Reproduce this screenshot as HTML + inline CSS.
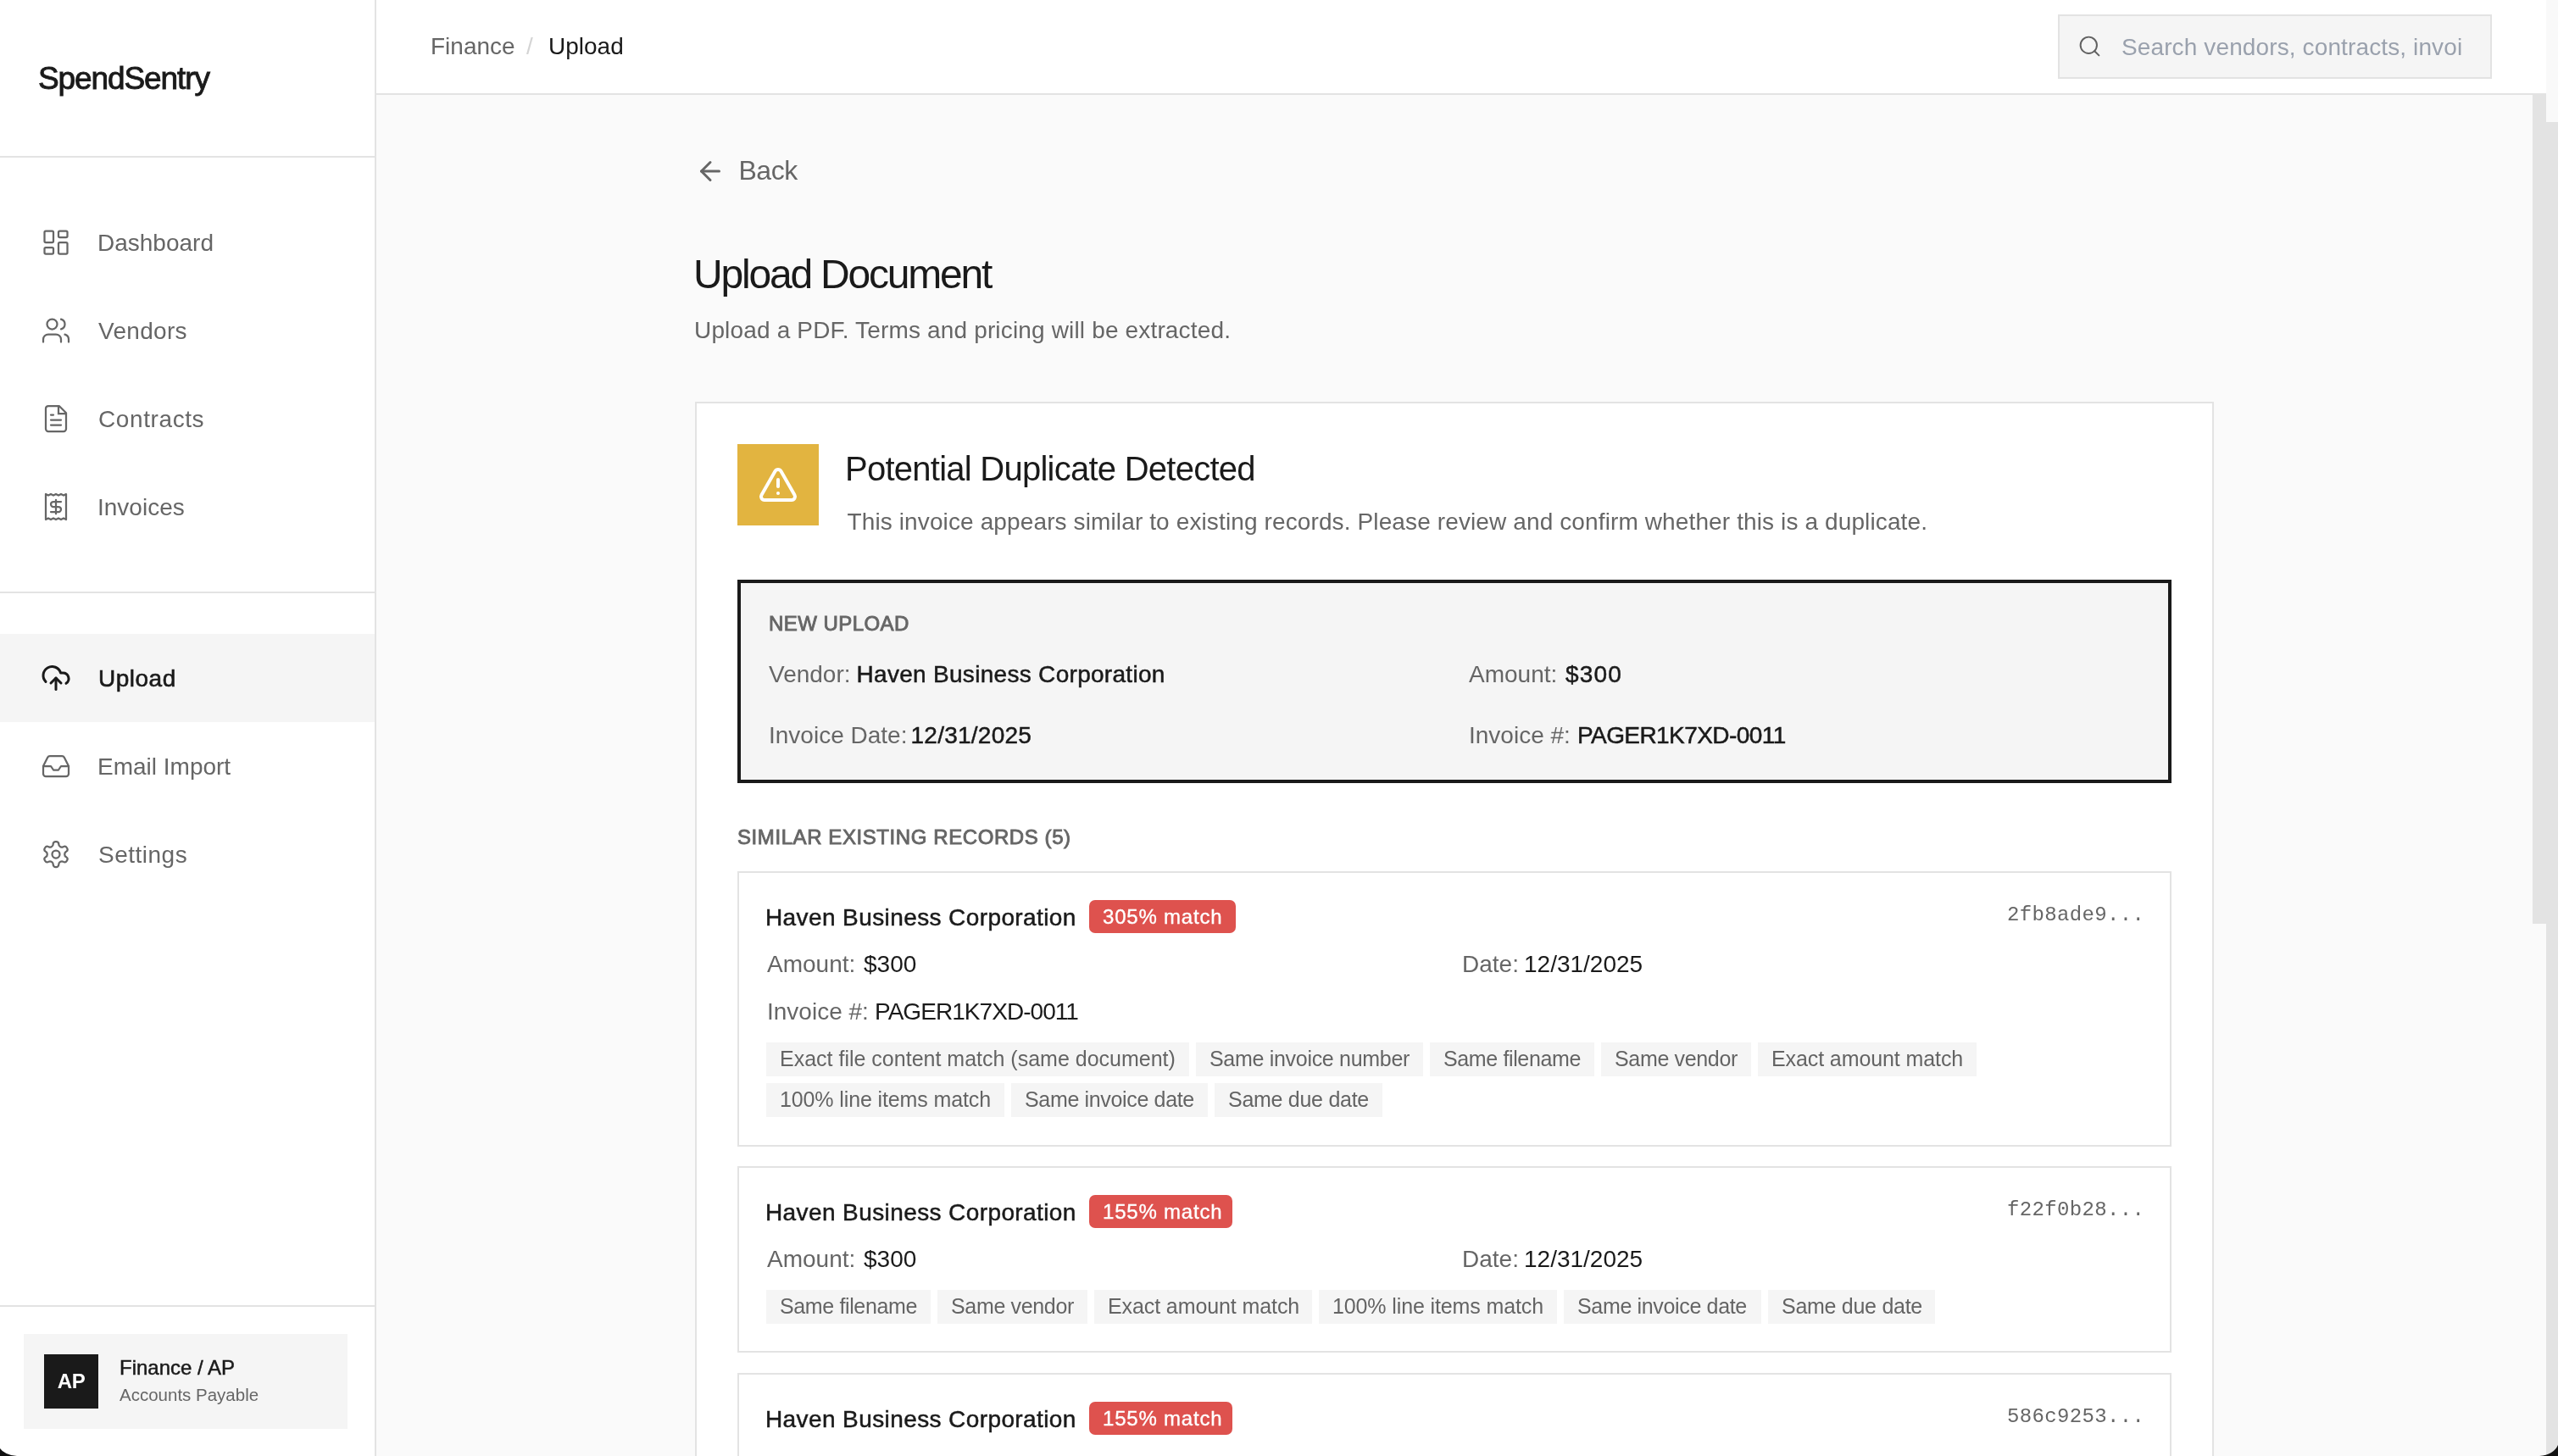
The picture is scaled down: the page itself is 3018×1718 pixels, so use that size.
<!DOCTYPE html>
<html>
<head>
<meta charset="utf-8">
<style>
html,body{margin:0;padding:0;width:3018px;height:1718px;overflow:hidden;background:#fafafa;font-family:"Liberation Sans",sans-serif;}
.a{position:absolute;}
.t{position:absolute;white-space:nowrap;line-height:1;}
.ic{position:absolute;fill:none;stroke-linecap:round;stroke-linejoin:round;}
.muted{color:#666;}
.dark{color:#1a1a1a;}
.f28{font-size:28px;}
.f24{font-size:24px;}
.tag{position:absolute;height:40px;background:#f5f5f5;}
.tag span{position:absolute;left:16px;top:7px;font-size:25px;line-height:1;color:#646464;white-space:nowrap;}
.badge{position:absolute;height:39px;background:#de524e;border-radius:7px;}
.badge span{position:absolute;left:16px;top:7.5px;font-size:24px;line-height:1;color:#fff;white-space:nowrap;letter-spacing:0.8px;-webkit-text-stroke:0.35px #fff;}
.mono{font-family:"Liberation Mono",monospace;}
.med{-webkit-text-stroke:0.5px currentColor;}
</style>
</head>
<body>
<div id="root" style="position:absolute;left:0;top:0;width:3018px;height:1718px;will-change:transform;">
<!-- SIDEBAR -->
<div class="a" style="left:0;top:0;width:442px;height:1718px;background:#fff;border-right:2px solid #e3e3e3;"></div>
<div class="t dark" style="left:45px;top:73.5px;font-size:37px;letter-spacing:-1.1px;-webkit-text-stroke:0.9px #1a1a1a;">SpendSentry</div>
<div class="a" style="left:0;top:184px;width:442px;height:2px;background:#e3e3e3;"></div>

<!-- nav icons -->
<svg class="ic" style="left:48px;top:268px" width="36" height="36" viewBox="0 0 24 24" stroke="#666" stroke-width="1.5"><rect width="7" height="9" x="3" y="3" rx="1"/><rect width="7" height="5" x="14" y="3" rx="1"/><rect width="7" height="9" x="14" y="12" rx="1"/><rect width="7" height="5" x="3" y="16" rx="1"/></svg>
<div class="t f28 muted" style="left:115px;top:273.2px;">Dashboard</div>

<svg class="ic" style="left:48px;top:372px" width="36" height="36" viewBox="0 0 24 24" stroke="#666" stroke-width="1.5"><path d="M16 21v-2a4 4 0 0 0-4-4H6a4 4 0 0 0-4 4v2"/><circle cx="9" cy="7" r="4"/><path d="M22 21v-2a4 4 0 0 0-3-3.87"/><path d="M16 3.13a4 4 0 0 1 0 7.75"/></svg>
<div class="t f28 muted" style="left:116px;top:377.2px;letter-spacing:0.3px;">Vendors</div>

<svg class="ic" style="left:48px;top:476px" width="36" height="36" viewBox="0 0 24 24" stroke="#666" stroke-width="1.5"><path d="M14.5 2H6a2 2 0 0 0-2 2v16a2 2 0 0 0 2 2h12a2 2 0 0 0 2-2V7.5L14.5 2z"/><polyline points="14 2 14 8 20 8" stroke-linejoin="miter"/><path d="M10 9H8"/><path d="M16 13H8"/><path d="M16 17H8"/></svg>
<div class="t f28 muted" style="left:116px;top:481.2px;letter-spacing:0.6px;">Contracts</div>

<svg class="ic" style="left:48px;top:580px" width="36" height="36" viewBox="0 0 24 24" stroke="#666" stroke-width="1.5"><path d="M4 2v20l2-1 2 1 2-1 2 1 2-1 2 1 2-1 2 1V2l-2 1-2-1-2 1-2-1-2 1-2-1-2 1Z"/><path d="M16 8h-6a2 2 0 1 0 0 4h4a2 2 0 1 1 0 4H8"/><path d="M12 17.5v-11"/></svg>
<div class="t f28 muted" style="left:115px;top:585.2px;">Invoices</div>

<div class="a" style="left:0;top:698px;width:442px;height:2px;background:#e3e3e3;"></div>

<div class="a" style="left:0;top:748px;width:442px;height:104px;background:#f5f5f5;"></div>
<svg class="ic" style="left:48px;top:782px" width="36" height="36" viewBox="0 0 24 24" stroke="#1a1a1a" stroke-width="2"><path d="M12 12v9"/><path d="M4 14.899A7 7 0 1 1 15.71 8h1.79a4.5 4.5 0 0 1 2.5 8.242"/><path d="m16 16-4-4-4 4"/></svg>
<div class="t f28 dark" style="left:116px;top:787.2px;-webkit-text-stroke:0.6px #1a1a1a;letter-spacing:0.5px;">Upload</div>

<svg class="ic" style="left:48px;top:886px" width="36" height="36" viewBox="0 0 24 24" stroke="#666" stroke-width="1.5"><polyline points="22 12 16 12 14 15 10 15 8 12 2 12"/><path d="M5.45 5.11 2 12v6a2 2 0 0 0 2 2h16a2 2 0 0 0 2-2v-6l-3.45-6.89A2 2 0 0 0 16.76 4H7.24a2 2 0 0 0-1.79 1.11z"/></svg>
<div class="t f28 muted" style="left:115px;top:891.2px;">Email Import</div>

<svg class="ic" style="left:48px;top:990px" width="36" height="36" viewBox="0 0 24 24" stroke="#666" stroke-width="1.5"><path d="M12.22 2h-.44a2 2 0 0 0-2 2v.18a2 2 0 0 1-1 1.730l-.43.25a2 2 0 0 1-2 0l-.15-.08a2 2 0 0 0-2.73.73l-.22.38a2 2 0 0 0 .73 2.73l.15.1a2 2 0 0 1 1 1.72v.51a2 2 0 0 1-1 1.74l-.15.09a2 2 0 0 0-.73 2.73l.22.38a2 2 0 0 0 2.73.73l.15-.08a2 2 0 0 1 2 0l.43.25a2 2 0 0 1 1 1.73V20a2 2 0 0 0 2 2h.44a2 2 0 0 0 2-2v-.18a2 2 0 0 1 1-1.73l.43-.25a2 2 0 0 1 2 0l.15.08a2 2 0 0 0 2.73-.73l.22-.39a2 2 0 0 0-.73-2.73l-.15-.08a2 2 0 0 1-1-1.74v-.5a2 2 0 0 1 1-1.74l.15-.09a2 2 0 0 0 .73-2.73l-.22-.38a2 2 0 0 0-2.73-.73l-.15.08a2 2 0 0 1-2 0l-.43-.25a2 2 0 0 1-1-1.73V4a2 2 0 0 0-2-2z"/><circle cx="12" cy="12" r="3"/></svg>
<div class="t f28 muted" style="left:116px;top:995.2px;letter-spacing:0.5px;">Settings</div>

<div class="a" style="left:0;top:1540px;width:442px;height:2px;background:#e3e3e3;"></div>
<div class="a" style="left:28px;top:1574px;width:382px;height:112px;background:#f5f5f5;"></div>
<div class="a" style="left:52px;top:1598px;width:64px;height:64px;background:#1a1a1a;"></div>
<div class="t" style="left:52px;width:64px;text-align:center;top:1618.3px;font-size:24px;color:#fff;font-weight:700;letter-spacing:-0.3px;">AP</div>
<div class="t dark med" style="left:141px;top:1601.8px;font-size:24px;">Finance / AP</div>
<div class="t muted" style="left:141px;top:1636.3px;font-size:20.5px;">Accounts Payable</div>

<!-- HEADER -->
<div class="a" style="left:444px;top:0;width:2574px;height:110px;background:#fff;border-bottom:2px solid #e3e3e3;"></div>
<div class="t f28 muted" style="left:508px;top:41.1px;">Finance</div>
<div class="t f28" style="left:621px;top:41.1px;color:#d4d4d4;">/</div>
<div class="t f28 dark" style="left:647px;top:41.1px;">Upload</div>
<div class="a" style="left:2428px;top:17px;width:508px;height:72px;background:#f5f5f5;border:2px solid #e3e3e3;"></div>
<svg class="ic" style="left:2451.4px;top:40.3px" width="29" height="29" viewBox="0 0 24 24" stroke="#616161" stroke-width="1.65"><circle cx="11" cy="11" r="8"/><path d="m21 21-4.3-4.3"/></svg>
<div class="t f28" style="left:2503px;top:41.9px;color:#9aa1ad;letter-spacing:0.12px;">Search vendors, contracts, invoi</div>

<!-- scrollbars -->
<div class="a" style="left:2988px;top:110px;width:16px;height:980px;background:#e3e3e3;"></div>
<div class="a" style="left:3004px;top:0;width:14px;height:144px;background:#f9f9f9;"></div>
<div class="a" style="left:3004px;top:144px;width:14px;height:1574px;background:#e3e3e3;"></div>

<!-- MAIN -->
<svg class="ic" style="left:820px;top:184px" width="36" height="36" viewBox="0 0 24 24" stroke="#666" stroke-width="2"><path d="m12 19-7-7 7-7"/><path d="M19 12H5"/></svg>
<div class="t muted" style="left:871.5px;top:184.75px;font-size:32px;letter-spacing:-0.5px;">Back</div>

<div class="t dark" style="left:818px;top:299.7px;font-size:48px;letter-spacing:-2.2px;">Upload Document</div>
<div class="t f28 muted" style="left:819px;top:375.6px;letter-spacing:0.16px;">Upload a PDF. Terms and pricing will be extracted.</div>

<div class="a" style="left:820px;top:474px;width:1788px;height:1300px;background:#fff;border:2px solid #e3e3e3;"></div>
<div class="a" style="left:870px;top:524px;width:96px;height:96px;background:#e2b440;"></div>
<svg class="ic" style="left:894px;top:548px" width="48" height="48" viewBox="0 0 24 24" stroke="#fff" stroke-width="2"><path d="m21.73 18-8-14a2 2 0 0 0-3.48 0l-8 14A2 2 0 0 0 4 21h16a2 2 0 0 0 1.73-3"/><path d="M12 9v4"/><path d="M12 17h.01"/></svg>
<div class="t dark" style="left:997px;top:532.8px;font-size:40px;letter-spacing:-0.75px;">Potential Duplicate Detected</div>
<div class="t f28 muted" style="left:999.5px;top:602.05px;letter-spacing:0.12px;">This invoice appears similar to existing records. Please review and confirm whether this is a duplicate.</div>

<div class="a" style="left:870px;top:684px;width:1684px;height:232px;background:#f5f5f5;border:4px solid #1a1a1a;"></div>
<div class="t muted" style="left:907px;top:724px;font-size:24px;letter-spacing:0.45px;-webkit-text-stroke:0.9px currentColor;">NEW UPLOAD</div>
<div class="t f28 muted" style="left:907px;top:782.05px;">Vendor:</div>
<div class="t f28 dark med" style="left:1010.5px;top:782.05px;letter-spacing:0.3px;">Haven Business Corporation</div>
<div class="t f28 muted" style="left:907px;top:854.2px;">Invoice Date:</div>
<div class="t f28 dark med" style="left:1074.5px;top:854.2px;letter-spacing:0.25px;">12/31/2025</div>
<div class="t f28 muted" style="left:1733px;top:782.05px;">Amount:</div>
<div class="t f28 dark med" style="left:1847px;top:782.05px;letter-spacing:1.2px;">$300</div>
<div class="t f28 muted" style="left:1733px;top:854.2px;">Invoice #:</div>
<div class="t f28 dark med" style="left:1861px;top:854.2px;letter-spacing:-0.57px;">PAGER1K7XD-0011</div>

<div class="t muted" style="left:870px;top:976.1px;font-size:24px;letter-spacing:0.58px;-webkit-text-stroke:0.9px currentColor;">SIMILAR EXISTING RECORDS (5)</div>

<!-- record 1 -->
<div class="a" style="left:870px;top:1028px;width:1688px;height:321px;background:#fff;border:2px solid #e3e3e3;"></div>
<div class="t f28 dark med" style="left:903px;top:1068.85px;letter-spacing:0.4px;">Haven Business Corporation</div>
<div class="badge" style="left:1285px;top:1062px;width:173px;"><span>305% match</span></div>
<div class="t mono muted" style="left:2368px;top:1068px;font-size:24px;letter-spacing:0.35px;">2fb8ade9...</div>
<div class="t f28 muted" style="left:905px;top:1124.35px;">Amount:</div>
<div class="t f28 dark" style="left:1019px;top:1124.35px;">$300</div>
<div class="t f28 muted" style="left:1725px;top:1124.35px;">Date:</div>
<div class="t f28 dark" style="left:1798px;top:1124.35px;">12/31/2025</div>
<div class="t f28 muted" style="left:905px;top:1180.15px;">Invoice #:</div>
<div class="t f28 dark" style="left:1032px;top:1180.15px;letter-spacing:-0.95px;">PAGER1K7XD-0011</div>
<div class="tag" style="left:904px;top:1230px;width:499px;"><span>Exact file content match (same document)</span></div>
<div class="tag" style="left:1411px;top:1230px;width:268px;"><span style="letter-spacing:-0.3px">Same invoice number</span></div>
<div class="tag" style="left:1687px;top:1230px;width:194px;"><span style="letter-spacing:-0.37px">Same filename</span></div>
<div class="tag" style="left:1889px;top:1230px;width:177px;"><span style="letter-spacing:-0.34px">Same vendor</span></div>
<div class="tag" style="left:2074px;top:1230px;width:258px;"><span style="letter-spacing:-0.1px">Exact amount match</span></div>
<div class="tag" style="left:904px;top:1278px;width:281px;"><span style="letter-spacing:-0.12px">100% line items match</span></div>
<div class="tag" style="left:1193px;top:1278px;width:232px;"><span style="letter-spacing:-0.34px">Same invoice date</span></div>
<div class="tag" style="left:1433px;top:1278px;width:198px;"><span style="letter-spacing:-0.28px">Same due date</span></div>

<!-- record 2 -->
<div class="a" style="left:870px;top:1376px;width:1688px;height:216px;background:#fff;border:2px solid #e3e3e3;"></div>
<div class="t f28 dark med" style="left:903px;top:1416.85px;letter-spacing:0.4px;">Haven Business Corporation</div>
<div class="badge" style="left:1285px;top:1410px;width:169px;"><span>155% match</span></div>
<div class="t mono muted" style="left:2368px;top:1416px;font-size:24px;letter-spacing:0.35px;">f22f0b28...</div>
<div class="t f28 muted" style="left:905px;top:1472.35px;">Amount:</div>
<div class="t f28 dark" style="left:1019px;top:1472.35px;">$300</div>
<div class="t f28 muted" style="left:1725px;top:1472.35px;">Date:</div>
<div class="t f28 dark" style="left:1798px;top:1472.35px;">12/31/2025</div>
<div class="tag" style="left:904px;top:1522px;width:194px;"><span style="letter-spacing:-0.37px">Same filename</span></div>
<div class="tag" style="left:1106px;top:1522px;width:177px;"><span style="letter-spacing:-0.34px">Same vendor</span></div>
<div class="tag" style="left:1291px;top:1522px;width:257px;"><span style="letter-spacing:-0.1px">Exact amount match</span></div>
<div class="tag" style="left:1556px;top:1522px;width:281px;"><span style="letter-spacing:-0.12px">100% line items match</span></div>
<div class="tag" style="left:1845px;top:1522px;width:233px;"><span style="letter-spacing:-0.34px">Same invoice date</span></div>
<div class="tag" style="left:2086px;top:1522px;width:197px;"><span style="letter-spacing:-0.28px">Same due date</span></div>

<!-- record 3 -->
<div class="a" style="left:870px;top:1620px;width:1688px;height:300px;background:#fff;border:2px solid #e3e3e3;"></div>
<div class="t f28 dark med" style="left:903px;top:1660.85px;letter-spacing:0.4px;">Haven Business Corporation</div>
<div class="badge" style="left:1285px;top:1654px;width:169px;"><span>155% match</span></div>
<div class="t mono muted" style="left:2368px;top:1660px;font-size:24px;letter-spacing:0.35px;">586c9253...</div>

<!-- window corners -->
<svg class="a" style="left:0;top:1698px" width="24" height="20"><path d="M0 11 Q5 18.5 20 20 L0 20 Z" fill="#111"/></svg>
<svg class="a" style="left:2994px;top:1698px" width="24" height="20"><path d="M24 7 Q19 18.5 2 20 L24 20 Z" fill="#111"/></svg>
</div>
</body>
</html>
